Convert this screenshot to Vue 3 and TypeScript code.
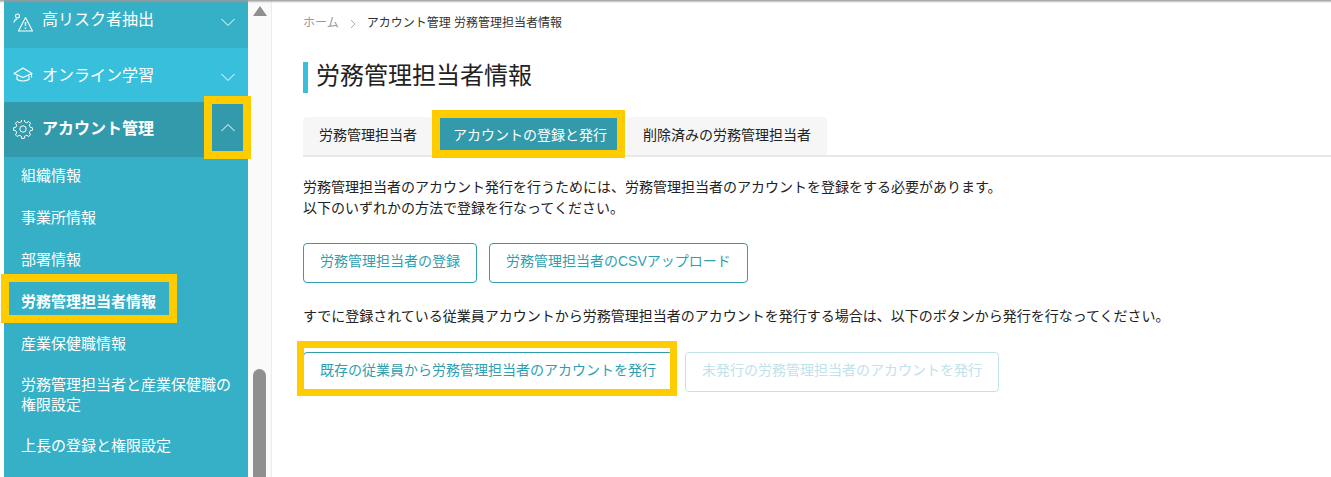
<template>
  <div class="page">
    <aside class="sidebar">
      <div
        v-for="item in menu"
        :key="item.label"
        :class="['menu-row', item.cls]"
      >
        <svg v-if="item.icon === 'risk'" class="menu-icon" viewBox="0 0 20 20" fill="none" stroke="#fff" stroke-width="1.100">
          <circle cx="4.500" cy="4" r="2" />
          <path d="M1 10.500c.2-1.800 1.200-3 3-3.200" />
          <path d="M12.500 5.500 19.500 19H5.500Z" stroke-linejoin="round" />
          <path d="M12.500 10v4M12.500 15.500v1.500" stroke-width="1.400" />
        </svg>
        <svg v-else-if="item.icon === 'cap'" class="menu-icon" viewBox="0 0 20 20" fill="none" stroke="#fff" stroke-width="1.100">
          <path d="M10 3 19 8.500 10 12.500 1 8.500Z" stroke-linejoin="round" />
          <path d="M4 10.500v4c2 1 4 1.500 6 1.500s4-.5 6-1.500v-4" />
          <path d="M18.500 8.500v4" />
        </svg>
        <svg v-else class="menu-icon" viewBox="0 0 20 20" fill="none" stroke="#fff" stroke-width="1">
          <circle cx="10" cy="9" r="3.200" />
          <path :d="gearPath" stroke-linejoin="round" />
        </svg>
        <span class="menu-label">{{ item.label }}</span>
        <svg class="chevron" viewBox="0 0 16 9" fill="none" stroke="#fff" stroke-width="1">
          <path :d="item.open ? 'M1.500 8 8 1.500 14.500 8' : 'M1.500 1 8 7.500 14.500 1'" />
        </svg>
      </div>
      <ul class="sub-menu">
        <li v-for="sub in subMenu" :key="sub" :class="{ current: sub === currentSub }">{{ sub }}</li>
      </ul>
    </aside>

    <div class="scrollbar">
      <span class="scroll-arrow"></span>
      <span class="scroll-thumb"></span>
    </div>

    <main class="content">
      <nav class="breadcrumb">
        <span class="crumb-home">ホーム</span>
        <span class="crumb-sep">
          <svg viewBox="0 0 6 10" fill="none" stroke="#aaa" stroke-width="1"><path d="M1 1l4 4-4 4" /></svg>
        </span>
        <span>アカウント管理 労務管理担当者情報</span>
      </nav>

      <h1 class="page-title">労務管理担当者情報</h1>

      <div class="tabs">
        <button
          v-for="tab in tabs"
          :key="tab"
          :class="['tab', { active: tab === activeTab }]"
          type="button"
        >{{ tab }}</button>
      </div>

      <p class="lead">
        労務管理担当者のアカウント発行を行うためには、労務管理担当者のアカウントを登録をする必要があります。<br />
        以下のいずれかの方法で登録を行なってください。
      </p>

      <div class="actions first">
        <button class="btn" type="button">労務管理担当者の登録</button>
        <button class="btn" type="button">労務管理担当者のCSVアップロード</button>
      </div>

      <p class="lead second">すでに登録されている従業員アカウントから労務管理担当者のアカウントを発行する場合は、以下のボタンから発行を行なってください。</p>

      <div class="actions">
        <button class="btn" type="button">既存の従業員から労務管理担当者のアカウントを発行</button>
        <button class="btn" type="button" disabled>未発行の労務管理担当者のアカウントを発行</button>
      </div>
    </main>

    <div class="top-shade"></div>
    <div class="mark mark-chevron"></div>
    <div class="mark mark-sub"></div>
    <div class="mark mark-tab"></div>
    <div class="mark mark-btn"></div>
  </div>
</template>

<script setup lang="ts">
interface MenuItem {
  label: string;
  icon: 'risk' | 'cap' | 'gear';
  cls: string;
  open?: boolean;
}

const menu: MenuItem[] = [
  { label: '高リスク者抽出', icon: 'risk', cls: 'row-risk' },
  { label: 'オンライン学習', icon: 'cap', cls: 'row-study' },
  { label: 'アカウント管理', icon: 'gear', cls: 'row-account', open: true }
];

const subMenu = [
  '組織情報',
  '事業所情報',
  '部署情報',
  '労務管理担当者情報',
  '産業保健職情報',
  '労務管理担当者と産業保健職の権限設定',
  '上長の登録と権限設定'
];
const currentSub = '労務管理担当者情報';

const tabs = ['労務管理担当者', 'アカウントの登録と発行', '削除済みの労務管理担当者'];
const activeTab = 'アカウントの登録と発行';

// 8 tooth cog outline around (10, 9)
const gearPath = (() => {
  const pts: string[] = [];
  const teeth = 8;
  for (let i = 0; i < teeth; i++) {
    const a = (i / teeth) * Math.PI * 2;
    const step = (Math.PI * 2) / teeth;
    const corners: [number, number][] = [
      [7.2, a - step * 0.5],
      [7.4, a - step * 0.3],
      [9.5, a - step * 0.17],
      [9.5, a + step * 0.17],
      [7.4, a + step * 0.3]
    ];
    for (const [r, t] of corners) {
      pts.push(`${(10 + r * Math.cos(t)).toFixed(2)} ${(9 + r * Math.sin(t)).toFixed(2)}`);
    }
  }
  return `M${pts.join('L')}Z`;
})();
</script>

<style>
html,
body {
  margin: 0;
  background: #fff;
  overflow: hidden;
}
</style>

<style scoped>
.page {
  position: relative;
  display: flex;
  height: 477px;
  overflow: hidden;
  padding-left: 4px;
  box-sizing: border-box;
  font-family: "Liberation Sans", "Noto Sans CJK JP", sans-serif;
  color: #222;
}

.sidebar {
  width: 244px;
  flex: none;
  background: #36b0c6;
  color: #fff;
}

.menu-row {
  display: flex;
  align-items: center;
  box-sizing: border-box;
  padding: 0 12px 0 9px;
  font-size: 16px;
}

.row-risk {
  height: 48px;
  padding-bottom: 4px;
}

.row-risk .menu-label {
  padding-bottom: 8px;
}

.row-study {
  height: 54px;
  background: #38bfdb;
}

.row-study .menu-label {
  padding-bottom: 3px;
}

.row-study .chevron {
  margin-top: 4px;
}

.row-account {
  height: 55px;
  background: #329aab;
  font-weight: 700;
}

.row-account .menu-label {
  padding-bottom: 5px;
}

.row-account .chevron {
  margin-bottom: 5px;
}

.menu-icon {
  width: 20px;
  height: 20px;
  flex: none;
  margin-right: 9px;
}

.menu-label {
  flex: 1;
}

.chevron {
  width: 16px;
  height: 9px;
  flex: none;
}

.sub-menu {
  list-style: none;
  margin: 0;
  padding: 1px 10px 0 17px;
  font-size: 15px;
  line-height: 20px;
}

.sub-menu li {
  padding: 8px 0 14px;
}

.sub-menu li:nth-child(6) {
  padding: 7px 0 14px;
}

.sub-menu li:nth-child(7) {
  padding-top: 7px;
}

.sub-menu li.current {
  font-weight: 700;
}

.scrollbar {
  position: relative;
  width: 23px;
  flex: none;
  background: #fafafa;
  border-right: 1px solid #ececec;
}

.scroll-arrow {
  position: absolute;
  left: 5px;
  top: 6px;
  border-left: 7px solid transparent;
  border-right: 7px solid transparent;
  border-bottom: 10px solid #8f8f8f;
}

.scroll-thumb {
  position: absolute;
  left: 5px;
  top: 369px;
  width: 13px;
  bottom: 0;
  border-radius: 7px 7px 0 0;
  background: #8f8f8f;
}

.content {
  flex: 1;
  min-width: 0;
  padding: 15px 0 0 31px;
}

.breadcrumb {
  display: flex;
  align-items: center;
  font-size: 12px;
  line-height: 17px;
  color: #333;
}

.crumb-home {
  color: #999;
}

.crumb-sep {
  display: flex;
  margin: 0 11px 0 11px;
}

.crumb-sep svg {
  width: 6px;
  height: 10px;
}

.page-title {
  margin: 30px 0 0;
  border-left: 5px solid #38bfdb;
  padding: 0 0 4px 8px;
  font-size: 24px;
  font-weight: 400;
  line-height: 27px;
  color: #222;
}

.tabs {
  display: flex;
  gap: 4px;
  margin-top: 24px;
  border-bottom: 2px solid #e8e8e8;
}

.tab {
  height: 38px;
  padding: 0 16px 5px;
  border: 0;
  border-radius: 4px 4px 0 0;
  background: #f6f6f6;
  font: inherit;
  font-size: 14px;
  color: #222;
}

.tab.active {
  background: #329aab;
  color: #fff;
  border-radius: 0;
}

.lead {
  margin: 20px 0 0;
  font-size: 14px;
  line-height: 21px;
  color: #222;
}

.lead.second {
  margin-top: 23px;
}

.actions {
  display: flex;
  gap: 12px;
}

.actions.first {
  margin-top: 24px;
}

.lead.second + .actions {
  margin-top: 25px;
}

.btn {
  height: 40px;
  padding: 0 16px 6px;
  border: 1px solid #2f9fb0;
  border-radius: 4px;
  background: #fff;
  font: inherit;
  font-size: 14px;
  color: #2f9fb0;
}

.btn:disabled {
  border-color: #c1e2e8;
  color: #c1e2e8;
}

.top-shade {
  position: absolute;
  left: 0;
  right: 0;
  top: 0;
  height: 3px;
  background: linear-gradient(#9a9a9a, rgba(154, 154, 154, 0));
}

.mark {
  position: absolute;
  box-sizing: border-box;
  border: 8px solid #ffcc00;
}

.mark-chevron {
  left: 204px;
  top: 96px;
  width: 47px;
  height: 63px;
}

.mark-sub {
  left: 1px;
  top: 274px;
  width: 176px;
  height: 49px;
}

.mark-tab {
  left: 432px;
  top: 110px;
  width: 193px;
  height: 48px;
}

.mark-btn {
  left: 297px;
  top: 341px;
  width: 380px;
  height: 55px;
  border-width: 7px;
}
</style>
